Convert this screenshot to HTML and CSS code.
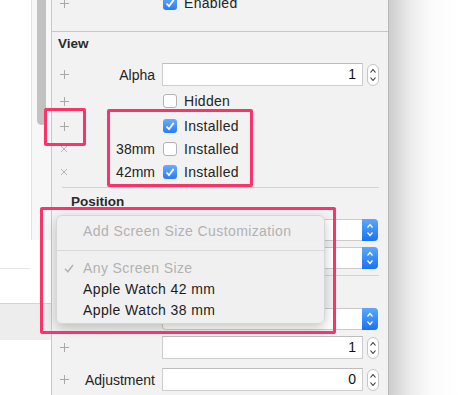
FILE: index.html
```html
<!DOCTYPE html>
<html lang="en">
<head>
    <meta charset="UTF-8">
    <title>Installed - Size Class Inspector</title>
    <link rel="stylesheet" href="styles.css">
</head>
<body>
    <div class="screen">
        <!-- outline on the left, mostly cut off -->
        <aside class="outline">
            <div class="outline-top">
                <div class="outline-list"></div>
                <div class="scroll-track"><div class="scroll-thumb"></div></div>
            </div>
            <div class="outline-mid"><div class="outline-line"></div></div>
            <div class="outline-bar"></div>
            <div class="outline-bottom"></div>
        </aside>

        <section class="inspector">
            <div class="row row-enabled">
                <span class="mark"><svg width="9" height="9"><path d="M4.5 0v9M0 4.5h9" stroke="#a9a9a9"/></svg></span>
                <span class="label"></span>
                <label class="check"><span class="box on"><svg viewBox="0 0 14 14"><path d="M3.5 7.5l2.5 2.7 4.7-6.3" stroke="#fff" stroke-width="1.8" fill="none"/></svg></span>Enabled</label>
            </div>

            <div class="sep"></div>
            <div class="section-title">View</div>

            <div class="row row-field">
                <span class="mark"><svg width="9" height="9"><path d="M4.5 0v9M0 4.5h9" stroke="#a9a9a9"/></svg></span>
                <span class="label">Alpha</span>
                <div class="field">1</div>
                <div class="stepper"><svg width="12" height="22"><path d="M3.5 8.5l2.5-3 2.5 3M3.5 13.5l2.5 3 2.5-3" stroke="#333" stroke-width="1.1" fill="none"/></svg></div>
            </div>

            <div class="row row-check gap5">
                <span class="mark"><svg width="9" height="9"><path d="M4.5 0v9M0 4.5h9" stroke="#a9a9a9"/></svg></span>
                <span class="label"></span>
                <label class="check"><span class="box"></span>Hidden</label>
            </div>

            <div class="row row-check gap5">
                <span class="mark"><svg width="9" height="9"><path d="M4.5 0v9M0 4.5h9" stroke="#a9a9a9"/></svg></span>
                <span class="label"></span>
                <label class="check"><span class="box on"><svg viewBox="0 0 14 14"><path d="M3.5 7.5l2.5 2.7 4.7-6.3" stroke="#fff" stroke-width="1.8" fill="none"/></svg></span>Installed</label>
            </div>

            <div class="row row-check gap3">
                <span class="mark"><svg width="8" height="8"><path d="M1 1l6 6M7 1l-6 6" stroke="#b3b3b3"/></svg></span>
                <span class="label">38mm</span>
                <label class="check"><span class="box"></span>Installed</label>
            </div>

            <div class="row row-check gap3">
                <span class="mark"><svg width="8" height="8"><path d="M1 1l6 6M7 1l-6 6" stroke="#b3b3b3"/></svg></span>
                <span class="label">42mm</span>
                <label class="check"><span class="box on"><svg viewBox="0 0 14 14"><path d="M3.5 7.5l2.5 2.7 4.7-6.3" stroke="#fff" stroke-width="1.8" fill="none"/></svg></span>Installed</label>
            </div>

            <div class="sep sep-inset"></div>
            <div class="section-title sub">Position</div>

            <div class="row row-popup first">
                <span class="mark"></span>
                <span class="label"></span>
                <div class="popup"><span class="popup-cap"><svg width="16" height="22"><path d="M5.5 8.5l2.5-3 2.5 3M5.5 13.5l2.5 3 2.5-3" stroke="#fff" stroke-width="1.3" fill="none"/></svg></span></div>
            </div>
            <div class="row row-popup">
                <span class="mark"></span>
                <span class="label"></span>
                <div class="popup"><span class="popup-cap"><svg width="16" height="22"><path d="M5.5 8.5l2.5-3 2.5 3M5.5 13.5l2.5 3 2.5-3" stroke="#fff" stroke-width="1.3" fill="none"/></svg></span></div>
            </div>

            <div class="sep sep-inset sep-low"></div>

            <div class="row row-popup after-title">
                <span class="mark"></span>
                <span class="label"></span>
                <div class="popup"><span class="popup-cap"><svg width="16" height="22"><path d="M5.5 8.5l2.5-3 2.5 3M5.5 13.5l2.5 3 2.5-3" stroke="#fff" stroke-width="1.3" fill="none"/></svg></span></div>
            </div>

            <div class="row row-field gap6">
                <span class="mark"><svg width="9" height="9"><path d="M4.5 0v9M0 4.5h9" stroke="#a9a9a9"/></svg></span>
                <span class="label"></span>
                <div class="field">1</div>
                <div class="stepper"><svg width="12" height="22"><path d="M3.5 8.5l2.5-3 2.5 3M3.5 13.5l2.5 3 2.5-3" stroke="#333" stroke-width="1.1" fill="none"/></svg></div>
            </div>

            <div class="row row-field gap10">
                <span class="mark"><svg width="9" height="9"><path d="M4.5 0v9M0 4.5h9" stroke="#a9a9a9"/></svg></span>
                <span class="label">Adjustment</span>
                <div class="field">0</div>
                <div class="stepper"><svg width="12" height="22"><path d="M3.5 8.5l2.5-3 2.5 3M3.5 13.5l2.5 3 2.5-3" stroke="#333" stroke-width="1.1" fill="none"/></svg></div>
            </div>
        </section>

        <div class="edge-shadow"></div>

        <!-- popup menu over the inspector -->
        <div class="menu">
            <div class="menu-item disabled">Add Screen Size Customization</div>
            <div class="menu-sep"></div>
            <div class="menu-item disabled">
                <span class="tick"><svg width="10" height="9"><path d="M1 4.8l2.8 3L9 1" stroke="#b4b4b4" stroke-width="1.6" fill="none"/></svg></span>Any Screen Size
            </div>
            <div class="menu-item">Apple Watch 42 mm</div>
            <div class="menu-item">Apple Watch 38 mm</div>
        </div>

        <!-- annotation boxes -->
        <div class="callout callout-plus"></div>
        <div class="callout callout-installed"></div>
        <div class="callout callout-menu"></div>
    </div>
</body>
</html>
```

FILE: styles.css
```css
body {
    margin: 0;
    background-color: white;
    font-family: "Liberation Sans", Arial, sans-serif;
    font-size: 14px;
    color: #242424;
}

.screen {
    position: relative;
    width: 460px;
    height: 395px;
    display: flex;
    overflow: hidden;
}

/* left outline */

.outline {
    width: 51px;
    display: flex;
    flex-direction: column;
    background-color: white;
}

.outline-top {
    height: 240px;
    display: flex;
}

.outline-list {
    width: 31px;
    border-right: 1px solid #e2e2e2;
}

.scroll-track {
    flex: 1;
    background-color: #f7f7f7;
}

.scroll-thumb {
    width: 9px;
    height: 125px;
    margin-left: 5px;
    background-color: #c2c2c2;
    border-radius: 0 0 5px 5px;
}

.outline-mid {
    height: 63px;
    padding-top: 28px;
    box-sizing: border-box;
}

.outline-line {
    width: 30px;
    height: 1px;
    background-color: #e6e6e6;
}

.outline-bar {
    height: 37px;
    background-color: #ededed;
    border-top: 1px solid #d4d4d4;
    box-sizing: border-box;
}

.outline-bottom {
    flex: 1;
}

/* inspector panel */

.inspector {
    width: 337px;
    flex-shrink: 0;
    background-color: #f2f2f2;
    border-left: 1px solid #c9c9c9;
    box-sizing: border-box;
}

.row {
    display: grid;
    grid-template-columns: 24px 86px 201px 16px;
    align-items: center;
    height: 20px;
}

.mark {
    display: flex;
    justify-content: center;
    align-items: center;
}

.label {
    text-align: right;
    padding-right: 7px;
    white-space: nowrap;
}

.row-enabled {
    height: 18px;
    margin-top: -6px;
}

.row-field {
    height: 23px;
    margin-top: 10px;
}

.row-field.gap6 {
    height: 22px;
    margin-top: 6px;
}

.row-field.gap10 {
    height: 22px;
    margin-top: 10px;
}

.row-check.gap5 {
    margin-top: 5px;
}

.row-check.gap3 {
    margin-top: 3px;
}

.check {
    display: flex;
    align-items: center;
    gap: 7px;
    padding-left: 1px;
    letter-spacing: 0.3px;
    white-space: nowrap;
}

.box {
    width: 14px;
    height: 14px;
    box-sizing: border-box;
    border: 1px solid #b4b4b4;
    border-radius: 3px;
    background-color: white;
    flex-shrink: 0;
}

.box.on {
    border: none;
    background: linear-gradient(#68adfc, #2a7bf5);
}

.box svg {
    display: block;
    width: 14px;
    height: 14px;
}

.field {
    height: 100%;
    box-sizing: border-box;
    background-color: white;
    border: 1px solid #cdcdcd;
    border-top-color: #bdbdbd;
    text-align: right;
    padding-right: 6px;
    line-height: 21px;
    color: #111;
}

.stepper {
    margin-left: 4px;
    width: 12px;
    height: 22px;
    box-sizing: border-box;
    border: 1px solid #c6c6c6;
    border-radius: 6px;
    background-color: white;
    overflow: hidden;
}

.stepper svg {
    display: block;
    margin: -1px 0 0 -1px;
}

.sep {
    height: 1px;
    margin-top: 19px;
    background-color: #c6c6c6;
}

.sep-inset {
    margin: 5px 9px 0 10px;
    background-color: #d2d2d2;
}

.sep-low {
    margin-top: 6px;
}

.section-title {
    height: 18px;
    line-height: 18px;
    margin-top: 3px;
    padding-left: 6px;
    font-weight: bold;
    font-size: 13.5px;
    color: #2a2a2a;
}

.section-title.sub {
    height: 16px;
    line-height: 16px;
    margin-top: 6px;
    padding-left: 19px;
}

.row-popup {
    height: 22px;
    margin-top: 6px;
}

.row-popup.first {
    margin-top: 9px;
}

.row-popup.after-title {
    margin-top: 32px;
}

.popup {
    grid-column: 3 / 5;
    width: 216px;
    height: 22px;
    box-sizing: border-box;
    background-color: white;
    border: 1px solid #cbcbcb;
    border-right: none;
    border-radius: 4px;
    display: flex;
    justify-content: flex-end;
}

.popup-cap {
    width: 16px;
    height: 22px;
    margin-top: -1px;
    border-radius: 0 4px 4px 0;
    background: linear-gradient(#5ba8fd, #1b72f1);
}

.popup-cap svg {
    display: block;
}

.edge-shadow {
    flex: 1;
    border-left: 1px solid #b9b9b9;
    background: linear-gradient(to right, #cdcdcd, #ececec 30%, #fbfbfb 60%, white);
}

/* menu */

.menu {
    position: absolute;
    left: 56px;
    top: 215px;
    width: 269px;
    height: 109px;
    box-sizing: border-box;
    padding-top: 5px;
    background-color: rgba(240, 240, 240, 0.98);
    border: 1px solid #d6d6d6;
    border-radius: 6px;
    box-shadow: 0 4px 12px rgba(0, 0, 0, 0.22);
}

.menu-item {
    position: relative;
    height: 21px;
    line-height: 21px;
    padding-left: 26px;
    letter-spacing: 0.4px;
    color: #1d1d1d;
}

.menu-item.disabled {
    color: #b2b2b2;
}

.tick {
    position: absolute;
    left: 7px;
    top: 6px;
    line-height: 0;
}

.menu-sep {
    height: 1px;
    margin: 8px 0 7px;
    background-color: #dadada;
}

/* annotations */

.callout {
    position: absolute;
    border: 3px solid #fa3469;
    border-radius: 2px;
    box-sizing: border-box;
}

.callout-plus {
    left: 44px;
    top: 108px;
    width: 42px;
    height: 38px;
}

.callout-installed {
    left: 107px;
    top: 109px;
    width: 146px;
    height: 78px;
}

.callout-menu {
    left: 40px;
    top: 207px;
    width: 296px;
    height: 127px;
}
```
